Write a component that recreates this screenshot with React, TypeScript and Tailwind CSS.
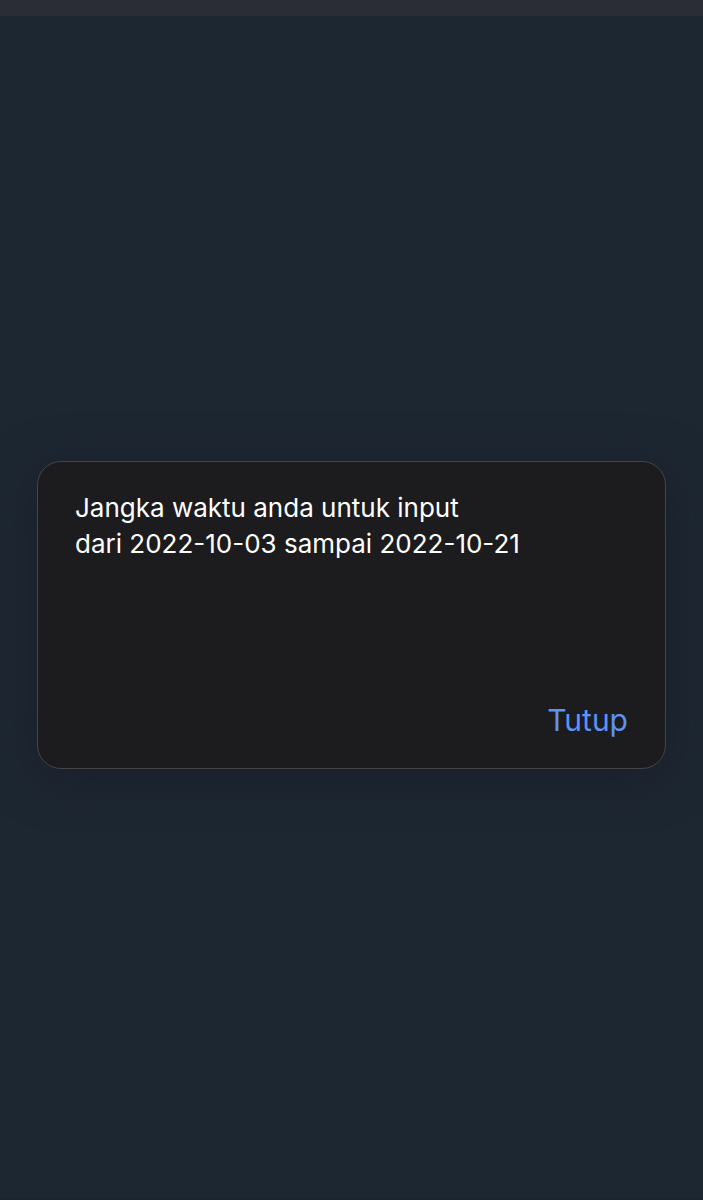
import { useState } from 'react';

export default function App() {
  const [isOpen, setIsOpen] = useState(true);

  return (
    <div className="flex min-h-screen flex-col bg-[#1d2732] font-['Inter',sans-serif]">
      {/* Status bar strip */}
      <header className="h-4 bg-[#2a2d35]" />

      <main className="flex flex-1 items-center justify-center px-[37px] pt-4">
        {isOpen && (
          <div
            role="dialog"
            aria-modal="true"
            aria-describedby="period-message"
            className="flex w-full flex-col rounded-[24px] border border-[#454548] bg-[#1c1c1e] px-[37px] pt-7 pb-6 shadow-[0_8px_48px_rgba(26,27,38,0.7)]"
          >
            <p id="period-message" className="min-h-[206px] text-[26px] leading-9 text-white">
              Jangka waktu anda untuk input
              <br />
              dari 2022-10-03 sampai 2022-10-21
            </p>
            <button
              type="button"
              className="self-end text-[30px] leading-[48px] text-[#5e93f2]"
              onClick={() => setIsOpen(false)}
            >
              Tutup
            </button>
          </div>
        )}
      </main>

      <footer className="h-0.5 bg-[#1d2333]" />
    </div>
  );
}
